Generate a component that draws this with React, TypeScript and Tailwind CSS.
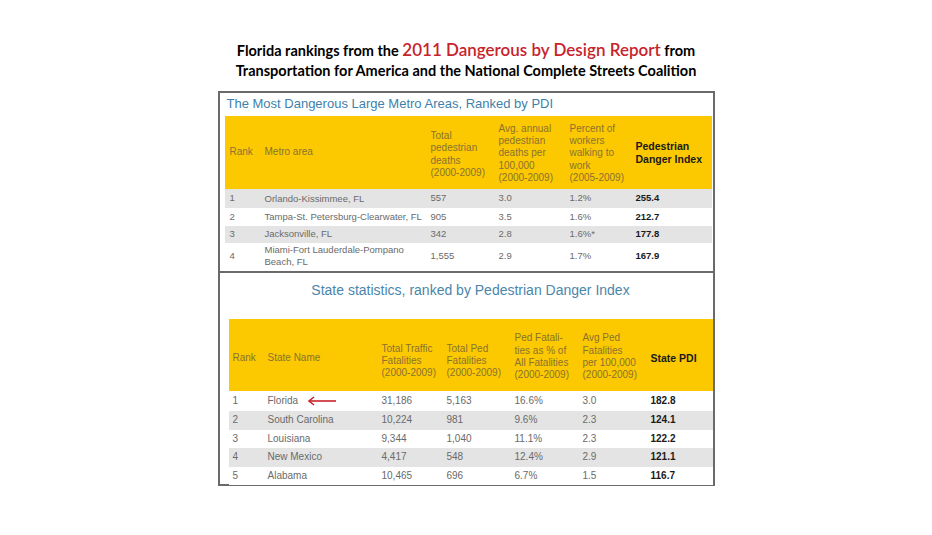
const metroRows = [
  { rank: "1", area: "Orlando-Kissimmee, FL", deaths: "557", avg: "3.0", pct: "1.2%", pdi: "255.4" },
  { rank: "2", area: "Tampa-St. Petersburg-Clearwater, FL", deaths: "905", avg: "3.5", pct: "1.6%", pdi: "212.7" },
  { rank: "3", area: "Jacksonville, FL", deaths: "342", avg: "2.8", pct: "1.6%*", pdi: "177.8" },
  { rank: "4", area: "Miami-Fort Lauderdale-Pompano|Beach, FL", deaths: "1,555", avg: "2.9", pct: "1.7%", pdi: "167.9" },
];

const stateRows = [
  { rank: "1", name: "Florida", traffic: "31,186", ped: "5,163", pct: "16.6%", avg: "3.0", pdi: "182.8" },
  { rank: "2", name: "South Carolina", traffic: "10,224", ped: "981", pct: "9.6%", avg: "2.3", pdi: "124.1" },
  { rank: "3", name: "Louisiana", traffic: "9,344", ped: "1,040", pct: "11.1%", avg: "2.3", pdi: "122.2" },
  { rank: "4", name: "New Mexico", traffic: "4,417", ped: "548", pct: "12.4%", avg: "2.9", pdi: "121.1" },
  { rank: "5", name: "Alabama", traffic: "10,465", ped: "696", pct: "6.7%", avg: "1.5", pdi: "116.7" },
];

function RedArrow() {
  return (
    <svg width="30" height="10" viewBox="0 0 30 10" className="ml-[9px]">
      <line x1="2" y1="5" x2="29" y2="5" stroke="#c8232b" strokeWidth="1.6" />
      <polyline points="7,1 2,5 7,9" fill="none" stroke="#c8232b" strokeWidth="1.6" />
    </svg>
  );
}

export default function App() {
  return (
    <div className="w-[932px] h-[535px] bg-white overflow-hidden" style={{ fontFamily: '"Liberation Sans", Arial, sans-serif' }}>
      {/* Heading */}
      <div className="pt-[40px] text-center text-[14.5px] leading-[20px] font-bold text-black" style={{ fontFamily: 'Lato, "Open Sans", sans-serif' }}>
        <div>
          Florida rankings from the{" "}
          <span className="text-[17px] font-semibold text-[#c8232b]">2011 Dangerous by Design Report</span> from
        </div>
        <div>Transportation for America and the National Complete Streets Coalition</div>
      </div>

      {/* Frame */}
      <div className="mx-auto mt-[10px] w-[497px] h-[395px] border-2 border-[#6a6a6a] flex flex-col">
        {/* Metro section */}
        <div className="pl-[5px] pr-[1px]">
          <div className="h-[23px] pl-[2px] pt-[3px] text-[13px] leading-[16px] text-[#3f7fab]">
            The Most Dangerous Large Metro Areas, Ranked by PDI
          </div>
          <table className="w-[487px] table-fixed border-collapse text-[10px] leading-[12.3px]">
            <colgroup>
              <col className="w-[40px]" />
              <col className="w-[166px]" />
              <col className="w-[68px]" />
              <col className="w-[71px]" />
              <col className="w-[66px]" />
              <col className="w-[76px]" />
            </colgroup>
            <thead>
              <tr className="bg-[#fcc900] h-[73px] text-[#8a7232] text-left">
                <th className="font-normal pl-[5px]">Rank</th>
                <th className="font-normal">Metro area</th>
                <th className="font-normal pt-[4px]">Total<br />pedestrian<br />deaths<br />(2000-2009)</th>
                <th className="font-normal pt-[2px]">Avg. annual<br />pedestrian<br />deaths per<br />100,000<br />(2000-2009)</th>
                <th className="font-normal pt-[2px]">Percent of<br />workers<br />walking to<br />work<br />(2005-2009)</th>
                <th className="font-bold text-[#1a1a1a] text-[10.5px] leading-[13px]">Pedestrian<br />Danger Index</th>
              </tr>
            </thead>
            <tbody className="text-[#6a6a6a] text-[9.5px]">
              {metroRows.map((r, i) => {
                const [a, b] = r.area.split("|");
                return (
                  <tr key={r.rank} className={`${i % 2 === 0 ? "bg-[#e4e4e4]" : "bg-white"} ${i === 3 ? "h-[26px]" : i === 0 ? "h-[19px]" : "h-[17.5px]"}`}>
                    <td className="pl-[5px]">{r.rank}</td>
                    <td className="whitespace-nowrap leading-[12px]">
                      {a}
                      {b && <br />}
                      {b}
                    </td>
                    <td>{r.deaths}</td>
                    <td>{r.avg}</td>
                    <td>{r.pct}</td>
                    <td className="font-bold text-[#1a1a1a]">{r.pdi}</td>
                  </tr>
                );
              })}
            </tbody>
          </table>
        </div>

        {/* State section */}
        <div className="mt-[2px] border-t-2 border-[#6a6a6a] pl-[9px] flex-1">
          <div className="h-[46px] pt-[8px] text-center text-[14px] leading-[18px] text-[#4a86ab]">
            State statistics, ranked by Pedestrian Danger Index
          </div>
          <table className="w-[484px] table-fixed border-collapse text-[10px] leading-[12.3px]">
            <colgroup>
              <col className="w-[39px]" />
              <col className="w-[114px]" />
              <col className="w-[65px]" />
              <col className="w-[68px]" />
              <col className="w-[68px]" />
              <col className="w-[68px]" />
              <col className="w-[62px]" />
            </colgroup>
            <thead>
              <tr className="bg-[#fcc900] h-[72px] text-[#8a7232] text-left">
                <th className="font-normal pl-[4px] pt-[6px]">Rank</th>
                <th className="font-normal pt-[6px]">State Name</th>
                <th className="font-normal pt-[12px]">Total Traffic<br />Fatalities<br />(2000-2009)</th>
                <th className="font-normal pt-[12px]">Total Ped<br />Fatalities<br />(2000-2009)</th>
                <th className="font-normal pt-[4px]">Ped Fatali-<br />ties as % of<br />All Fatalities<br />(2000-2009)</th>
                <th className="font-normal pt-[4px]">Avg Ped<br />Fatalities<br />per 100,000<br />(2000-2009)</th>
                <th className="font-bold text-[#1a1a1a] text-[10.5px] pt-[6px]">State PDI</th>
              </tr>
            </thead>
            <tbody className="text-[#6a6a6a] text-[10px]">
              {stateRows.map((r, i) => (
                <tr key={r.rank} className={`${i % 2 === 1 ? "bg-[#e4e4e4]" : "bg-white"} ${i === 0 ? "h-[20px]" : "h-[18.5px]"}`}>
                  <td className="pl-[4px]">{r.rank}</td>
                  <td>
                    <div className="flex items-center">
                      <span>{r.name}</span>
                      {i === 0 && <RedArrow />}
                    </div>
                  </td>
                  <td>{r.traffic}</td>
                  <td>{r.ped}</td>
                  <td>{r.pct}</td>
                  <td>{r.avg}</td>
                  <td className="font-bold text-[#1a1a1a]">{r.pdi}</td>
                </tr>
              ))}
            </tbody>
          </table>
        </div>
      </div>
    </div>
  );
}
